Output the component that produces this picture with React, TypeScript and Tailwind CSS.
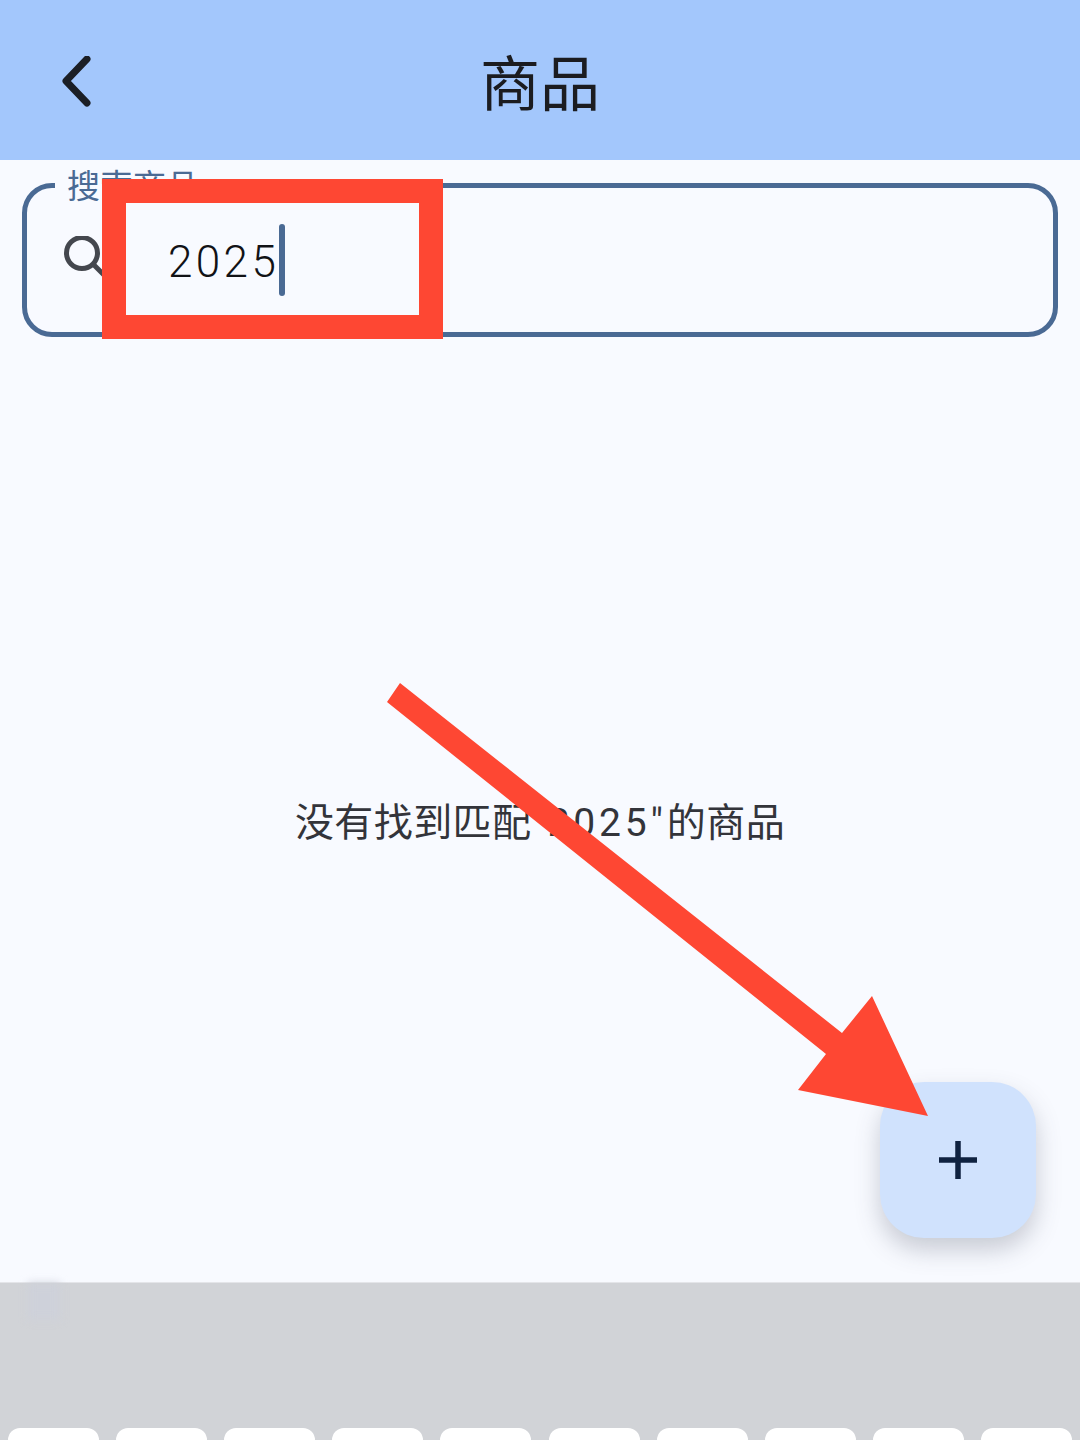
const font = "font-['Roboto','Noto_Sans_CJK_SC',sans-serif]";

const keys = Array.from({ length: 10 }, (_, i) => i);

function BackIcon() {
  return (
    <svg width="36" height="56" viewBox="0 0 36 56" fill="none" className="ml-[60px]">
      <path d="M27 3 L6 25 L27 47" stroke="#1b1f26" strokeWidth="7" strokeLinecap="round" strokeLinejoin="round" />
    </svg>
  );
}

function SearchIcon() {
  return (
    <svg width="48" height="48" viewBox="0 0 48 48" fill="none">
      <circle cx="18" cy="17" r="15.500" stroke="#44474e" strokeWidth="5" />
      <path d="M29 28 L42 41" stroke="#44474e" strokeWidth="5" />
    </svg>
  );
}

function SearchField() {
  return (
    <div className="relative flex h-[154px] items-center rounded-[30px] border-[5px] border-[#4a6a94] pl-[37px]">
      <span className="absolute left-[28px] top-[-21px] bg-[#f8faff] px-[12px] text-[33px] leading-[40px] text-[#4a6a94]">
        搜索商品
      </span>
      <SearchIcon />
      <span className="ml-[56px] pt-[4px] text-[44px] leading-[56px] font-light tracking-[3.400px] text-[#111216]">2025</span>
      <span className="h-[72px] w-[6px] rounded-full bg-[#4a6a94]" />
    </div>
  );
}

function Annotations() {
  return (
    <>
      <div className="absolute left-[102px] top-[179px] h-[160px] w-[341px] border-[24px] border-[#fe4733]" />
      <svg width="1080" height="1440" viewBox="0 0 1080 1440" className="absolute left-0 top-0">
        <polygon
          points="400,683 842,1033 872,996 928,1116 798,1090 826,1054 387,702"
          fill="#fe4733"
        />
      </svg>
    </>
  );
}

export default function App() {
  return (
    <div className={`relative flex h-[1440px] w-[1080px] flex-col overflow-hidden bg-[#f8faff] ${font}`}>
      <header className="relative flex h-[160px] shrink-0 items-center bg-[#a3c7fc] pt-[8px]">
        <BackIcon />
        <h1 className="absolute inset-x-0 pt-[3px] text-center text-[60px] leading-[72px] font-normal text-[#1b1c20]">商品</h1>
      </header>

      <main className="flex flex-1 flex-col px-[22px] pt-[23px]">
        <SearchField />
        <div className="flex flex-1 items-center justify-center pt-[26px]">
          <p className="text-[39px] leading-[50px] tracking-[0.400px] text-[#33343a]">
            没有找到匹配<span className="tracking-[3.800px]">"2025"</span>的商品
          </p>
        </div>
      </main>

      <div className="relative flex h-[158px] shrink-0 items-end justify-between border-t border-[#e4e5e9] bg-[#d1d3d7] px-[8px]">
        <div className="absolute left-[28px] top-0 h-[37px] w-[32px] bg-[#ced1da] blur-[4px]" />
        {keys.map((k) => (
          <div key={k} className="h-[12px] w-[91px] rounded-t-[16px] bg-white" />
        ))}
      </div>

      <button className="absolute left-[880px] top-[1082px] flex h-[156px] w-[156px] items-center justify-center rounded-[44px] bg-[#d0e2fd] shadow-[0_12px_24px_rgba(60,70,90,0.26)]">
        <svg width="40" height="40" viewBox="0 0 40 40" fill="none">
          <path d="M20 1 V39 M1 20 H39" stroke="#0f2240" strokeWidth="5.500" />
        </svg>
      </button>

      <Annotations />
    </div>
  );
}
